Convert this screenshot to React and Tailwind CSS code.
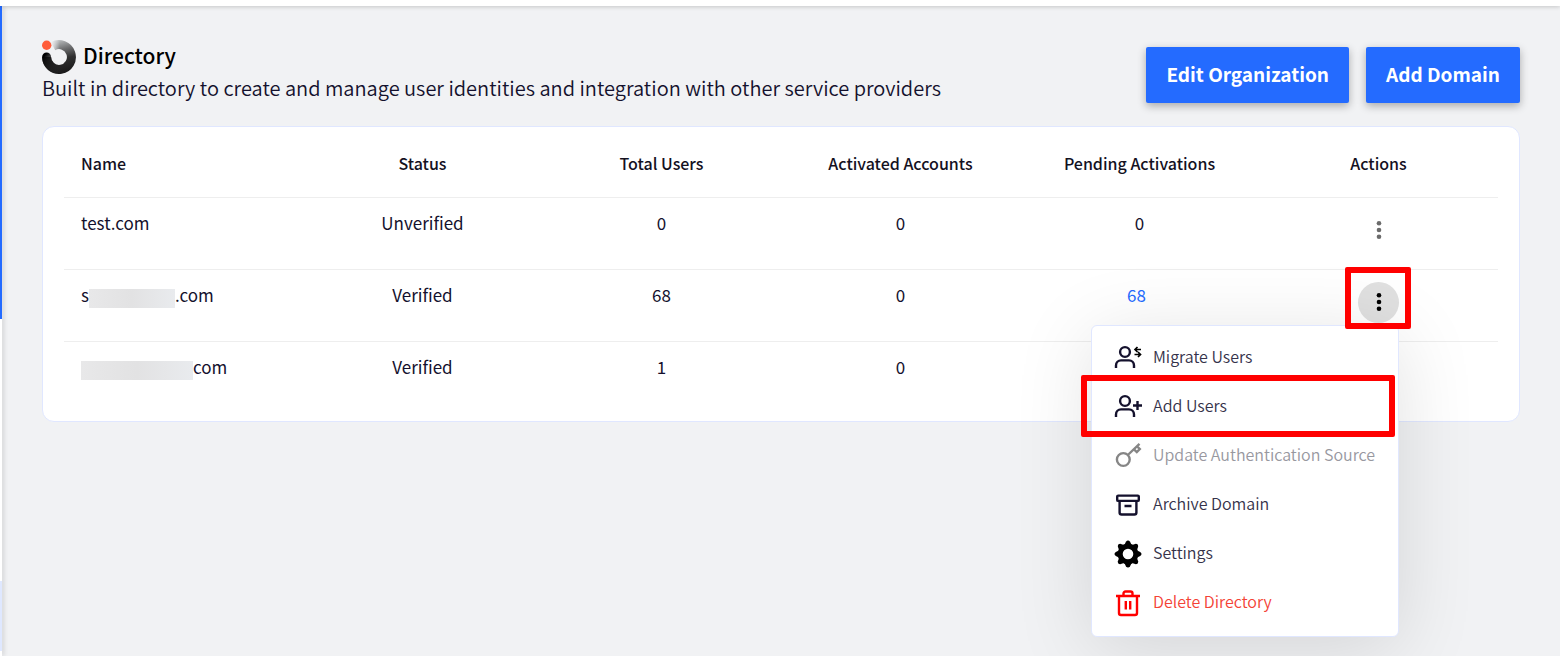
import React from 'react';

const domains = [
  { id: 1, name: 'test.com', status: 'Unverified', total: 0, activated: 0, pending: 0 },
  { id: 2, prefix: 's', suffix: '.com', maskClass: 'w-[86px]', status: 'Verified', total: 68, activated: 0, pending: 68, open: true },
  { id: 3, prefix: '', suffix: 'com', maskClass: 'w-28', status: 'Verified', total: 1, activated: 0, pending: null },
];

const Logo = () => (
  <svg width="34" height="34" viewBox="0 0 34 34" fill="none" aria-hidden="true">
    <defs>
      <linearGradient id="ring" x1="12" y1="2" x2="20" y2="32" gradientUnits="userSpaceOnUse">
        <stop offset="0" stopColor="#b4b7b8" />
        <stop offset="0.3" stopColor="#6c6d6e" />
        <stop offset="0.6" stopColor="#303030" />
        <stop offset="1" stopColor="#1c1c1c" />
      </linearGradient>
      <linearGradient id="tip" x1="9" y1="6" x2="18" y2="6" gradientUnits="userSpaceOnUse">
        <stop offset="0" stopColor="#f1f2f4" />
        <stop offset="1" stopColor="#f1f2f4" stopOpacity="0" />
      </linearGradient>
      <linearGradient id="tail" x1="2" y1="16" x2="18" y2="30" gradientUnits="userSpaceOnUse">
        <stop offset="0" stopColor="#000" />
        <stop offset="1" stopColor="#1c1c1c" stopOpacity="0" />
      </linearGradient>
    </defs>
    <path d="M11 6.200A12.400 12.400 0 1 1 4.600 17" stroke="url(#ring)" strokeWidth="9" />
    <path d="M4.600 17A12.400 12.400 0 0 0 17 29.400" stroke="url(#tail)" strokeWidth="9" strokeLinecap="round" />
    <path d="M7 0h12v12H7z" fill="url(#tip)" />
    <circle cx="4.700" cy="5.200" r="4.700" fill="#ff5c39" />
  </svg>
);

const UserShape = () => (
  <>
    <circle cx="11" cy="8" r="4.900" />
    <path d="M2 24v-2.600a5 5 0 0 1 5-5h8a5 5 0 0 1 5 5V24" />
  </>
);

const MigrateIcon = () => (
  <svg className="shrink-0" width="28" height="28" viewBox="0 0 28 28" fill="none" stroke="#14112d" strokeWidth="2.400">
    <UserShape />
    <path d="M27 5.500h-6M23.500 3l-2.500 2.500L23.500 8M20.500 10.500h6M24 8l2.500 2.500-2.500 2.500" stroke="#000" strokeWidth="1.700" />
  </svg>
);

const AddIcon = () => (
  <svg className="shrink-0" width="28" height="28" viewBox="0 0 28 28" fill="none" stroke="#14112d" strokeWidth="2.400">
    <UserShape />
    <path d="M23.500 8v9M19 12.500h9" />
  </svg>
);

const KeyIcon = () => (
  <svg className="shrink-0" width="28" height="28" viewBox="0 0 28 28" fill="none" stroke="#868686" strokeWidth="2.400">
    <circle cx="9.300" cy="17.500" r="6.400" />
    <path d="M13.800 13 25.500 1.800M20 7.300l2.800 2.700 3-3-2.800-2.700" />
  </svg>
);

const ArchiveIcon = () => (
  <svg className="shrink-0" width="28" height="28" viewBox="0 0 28 28" fill="none" stroke="#14112d" strokeWidth="2.400" strokeLinejoin="round">
    <rect x="3.200" y="4.600" width="21.600" height="5.300" rx="1" />
    <path d="M5.600 9.900V21.500a2 2 0 0 0 2 2h12.800a2 2 0 0 0 2-2V9.900M10.500 15h7" />
  </svg>
);

const GearIcon = () => (
  <svg className="shrink-0" width="28" height="28" viewBox="0 0 28 28" fill="#000">
    <path
      fillRule="evenodd"
      d="M14 3.600a10.400 10.400 0 1 0 0 20.800 10.400 10.400 0 0 0 0-20.800Zm0 5.100a5.300 5.300 0 1 1 0 10.600 5.300 5.300 0 0 1 0-10.600Z"
    />
    {[0, 45, 90, 135, 180, 225, 270, 315].map((angle) => (
      <path key={angle} d="M10.500 4.800 11.900 1.800Q14-0.800 16.100 1.800L17.500 4.800Z" transform={`rotate(${angle} 14 14)`} />
    ))}
  </svg>
);

const TrashIcon = () => (
  <svg className="shrink-0" width="28" height="28" viewBox="0 0 28 28" fill="none" stroke="#f00" strokeWidth="2.400" strokeLinejoin="round">
    <path d="M2 7h24M9.500 7V4.500a2 2 0 0 1 2-2h5a2 2 0 0 1 2 2V7M5 7v17a2 2 0 0 0 2 2h14a2 2 0 0 0 2-2V7M11.800 12v8.500M16.200 12v8.500" />
  </svg>
);

const menuItems = [
  { label: 'Migrate Users', icon: MigrateIcon },
  { label: 'Add Users', icon: AddIcon, highlighted: true },
  { label: 'Update Authentication Source', icon: KeyIcon, disabled: true },
  { label: 'Archive Domain', icon: ArchiveIcon },
  { label: 'Settings', icon: GearIcon },
  { label: 'Delete Directory', icon: TrashIcon, danger: true },
];

const itemColor = (item) => {
  if (item.disabled) return 'text-[#98989f]';
  if (item.danger) return 'text-[#f44336]';
  return 'text-[#35324a]';
};

const ActionsMenu = () => (
  <div
    role="menu"
    className="absolute right-0 top-full z-10 mt-0.5 w-[308px] rounded-md border border-[#e0e7ff] bg-white py-2 shadow-[0_12px_80px_rgba(0,0,0,0.12)]"
  >
    {menuItems.map((item) => (
      <div key={item.label} className="relative">
        <button
          type="button"
          role="menuitem"
          disabled={item.disabled}
          className={`flex h-[49px] w-full items-center gap-[11px] px-[22px] text-left text-base font-[350] whitespace-nowrap ${itemColor(item)}`}
        >
          <item.icon />
          <span className="pb-1">{item.label}</span>
        </button>
        {item.highlighted && (
          <div className="pointer-events-none absolute -top-2 -bottom-[5px] -left-[11px] right-[3px] rounded-xs border-6 border-[#f00]" />
        )}
      </div>
    ))}
  </div>
);

const RowActions = ({ open }) => (
  <div className="relative inline-block">
    <button
      type="button"
      aria-label="Domain actions"
      aria-expanded={Boolean(open)}
      className={`flex size-[41px] items-center justify-center rounded-full ${open ? 'bg-[#e0e0e0] text-black' : 'text-[#6b6b6b]'}`}
    >
      <svg width="6" height="20" viewBox="0 0 6 20" fill="currentColor">
        <circle cx="3" cy="3.200" r="2.300" />
        <circle cx="3" cy="10" r="2.300" />
        <circle cx="3" cy="16.800" r="2.300" />
      </svg>
    </button>
    {open && <ActionsMenu />}
    {open && (
      <div className="pointer-events-none absolute -left-[13px] -right-3 -top-[15px] -bottom-1.5 z-20 rounded-xs border-6 border-[#f00]" />
    )}
  </div>
);

const DomainName = ({ domain }) => {
  if (domain.name) return domain.name;
  return (
    <span className="flex items-end">
      {domain.prefix}
      <span className={`h-[19px] ${domain.maskClass} bg-linear-to-r from-[#e8e8e9] via-[#e2e2e3] to-[#e9ebee]`} />
      {domain.suffix}
    </span>
  );
};

const App = () => {
  return (
    <div className="flex min-h-screen flex-col bg-[#f1f2f4] font-['Source_Sans_Pro','Noto_Sans_CJK_SC',sans-serif] text-[#14112d]">
      {/* Top bar edge */}
      <div className="relative z-10 h-1.5 bg-white shadow-[0_1px_4px_rgba(0,0,0,0.18)]" />

      <div className="flex flex-1">
        {/* Sidebar edge */}
        <aside className="flex w-0.5 flex-col bg-white shadow-[1px_0_5px_rgba(0,0,0,0.25)]">
          <div className="h-[313px] bg-[#246bff]" />
          <div className="flex-1" />
          <div className="mb-[5px] h-[70px] bg-[#dfe8ff]" />
        </aside>

        <main className="min-w-0 flex-1 px-10 pt-[34px]">
          <header className="flex items-start justify-between">
            <div>
              <div className="flex h-[34px] items-center gap-[7px]">
                <Logo />
                <h1 className="pb-0.5 text-[21px] font-medium text-black">Directory</h1>
              </div>
              <p className="text-xl leading-7 font-[350]">
                Built in directory to create and manage user identities and integration with other service providers
              </p>
            </div>
            <div className="flex gap-[17px] pt-[7px]">
              <button type="button" className="h-14 rounded-xs bg-[#246bff] px-5 pb-0.5 text-[19px] font-bold text-white shadow-[0_3px_8px_rgba(0,0,0,0.3)]">
                Edit Organization
              </button>
              <button type="button" className="h-14 rounded-xs bg-[#246bff] px-5 pb-0.5 text-[19px] font-bold text-white shadow-[0_3px_8px_rgba(0,0,0,0.3)]">
                Add Domain
              </button>
            </div>
          </header>

          {/* Domains */}
          <section className="mt-[23px] rounded-xl border border-[#e0e7ff] bg-white px-[21px] pb-2">
            <table className="w-full table-fixed border-collapse text-center">
              <thead>
                <tr className="h-[70px] border-b border-[#eeeeee] text-base text-[#14111f]">
                  <th className="px-[17px] pt-0.5 text-left font-medium">Name</th>
                  <th className="pt-0.5 font-medium">Status</th>
                  <th className="pt-0.5 font-medium">Total Users</th>
                  <th className="pt-0.5 font-medium">Activated Accounts</th>
                  <th className="pt-0.5 font-medium">Pending Activations</th>
                  <th className="pt-0.5 font-medium">Actions</th>
                </tr>
              </thead>
              <tbody>
                {domains.map((domain) => (
                  <tr key={domain.id} className="h-[72px] border-b border-[#eeeeee] align-top text-[17px] leading-[26px] last:border-b-0">
                    <td className="px-[17px] pt-3 text-left">
                      <DomainName domain={domain} />
                    </td>
                    <td className="pt-3">{domain.status}</td>
                    <td className="pt-3">{domain.total}</td>
                    <td className="pt-3">{domain.activated}</td>
                    <td className="pt-3">
                      {domain.pending > 0 ? (
                        <a href="#pending" className="pr-1.5 text-[#246bff]">{domain.pending}</a>
                      ) : (
                        domain.pending
                      )}
                    </td>
                    <td className="pt-3">{domain.pending !== null && <RowActions open={domain.open} />}</td>
                  </tr>
                ))}
              </tbody>
            </table>
          </section>
        </main>
      </div>
    </div>
  );
};

export default App;
